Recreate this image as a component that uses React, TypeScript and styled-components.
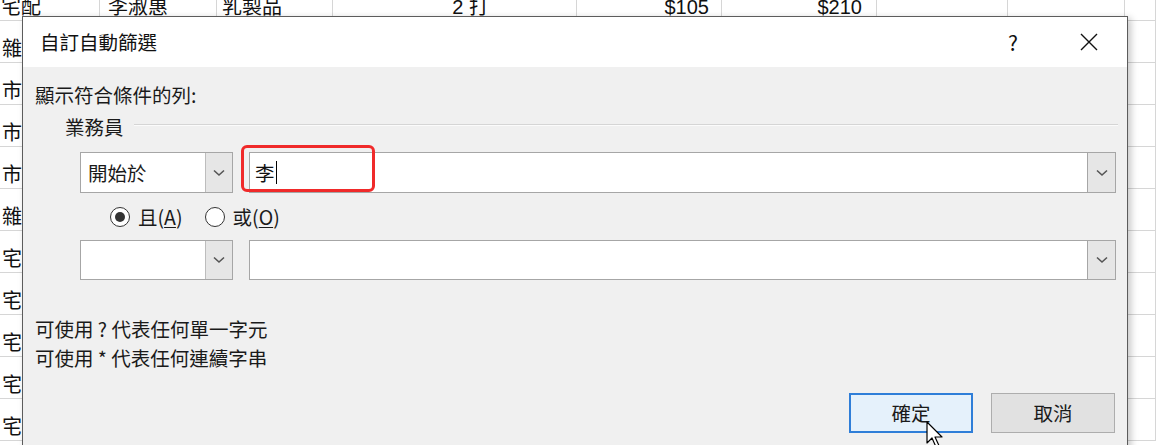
import React from 'react';
import styled, { createGlobalStyle } from 'styled-components';

const GlobalStyle = createGlobalStyle`
  html, body { margin: 0; padding: 0; background: #fff; }
  body { font-family: "Noto Sans CJK TC", "Noto Sans", sans-serif; }
  * { box-sizing: border-box; }
`;

const Screen = styled.div`
  position: relative;
  width: 1156px;
  height: 445px;
  overflow: hidden;
  background: #fff;
`;

const Sheet = styled.div`
  display: flex;
  flex-direction: column;
  margin-top: -21px;
`;

const SheetRow = styled.div`
  display: grid;
  grid-template-columns: 100px 117px 116px 244px 145px 155px 131px 117px 1fr;
  height: 42px;
`;

const Cell = styled.div<{ $right?: boolean; $pr?: number; $pl?: number }>`
  border-right: 1px solid #d6d6d6;
  border-bottom: 1px solid #d6d6d6;
  display: flex;
  align-items: flex-end;
  justify-content: ${p => (p.$right ? 'flex-end' : 'flex-start')};
  padding: 0 ${p => p.$pr ?? 4}px 1px ${p => p.$pl ?? 5}px;
  font-family: "Liberation Sans", "Noto Sans CJK TC", sans-serif;
  font-size: 20px;
  line-height: 24px;
  color: #111;
  white-space: nowrap;
  overflow: hidden;
`;

const Dialog = styled.div`
  position: absolute;
  left: 22px;
  top: 16px;
  width: 1106px;
  height: 460px;
  border: 1px solid #5c5c5c;
  background: #f0f0f0;
  box-shadow: 3px 2px 7px rgba(0, 0, 0, 0.22);
  display: flex;
  flex-direction: column;
  font-family: "Noto Sans CJK TC", "Noto Sans", sans-serif;
  font-size: 19.5px;
  color: #1a1a1a;
`;

const TitleBar = styled.div`
  height: 50px;
  background: #fff;
  display: flex;
  align-items: center;
  padding-left: 17px;
`;

const TitleText = styled.div`
  flex: 1;
  line-height: 24px;
  color: #111;
`;

const TitleButton = styled.div`
  width: 76px;
  height: 50px;
  display: flex;
  align-items: center;
  justify-content: center;
  font-size: 21px;
  color: #111;
`;

const Body = styled.div`
  display: flex;
  flex-direction: column;
  padding: 17px 11px 0 12px;
`;

const Label = styled.div`
  line-height: 22px;
`;

const GroupHeader = styled.div`
  display: flex;
  align-items: center;
  gap: 10px;
  margin: 10px -2px 0 30px;
  line-height: 22px;
`;

const GroupLine = styled.div`
  flex: 1;
  height: 2px;
  margin-top: -4px;
  border-top: 1px solid #d5d5d5;
  border-bottom: 1px solid #fbfbfb;
`;

const CondRow = styled.div<{ $mt: number }>`
  display: flex;
  gap: 16px;
  height: ${p => (p.$mt === 14 ? 41 : 40)}px;
  margin: ${p => p.$mt}px 0 0 45px;
`;

const Combo = styled.div`
  width: 153px;
  height: 100%;
  display: flex;
  border: 1px solid #a6a6a6;
  background: #fff;
`;

const ComboText = styled.div`
  flex: 1;
  display: flex;
  align-items: center;
  padding-left: 7px;
  line-height: 24px;
`;

const DropButton = styled.div`
  width: 27px;
  height: 100%;
  display: flex;
  align-items: center;
  justify-content: center;
  background: #e6e6e6;
  border-left: 1px solid #bdbdbd;
`;

const InputBox = styled.div`
  flex: 1;
  height: 100%;
  display: flex;
  border: 1px solid #a6a6a6;
  background: #fff;
`;

const InputText = styled.div`
  flex: 1;
  display: flex;
  align-items: center;
  padding-left: 5px;
  line-height: 24px;
  color: #111;
`;

const Caret = styled.span`
  width: 0;
  height: 23px;
  border-left: 1.5px solid #000;
  margin-left: 1px;
`;

const InputDrop = styled(DropButton)`
  width: 28px;
  border-left: 1px solid #a6a6a6;
`;

const RadioRow = styled.div`
  display: flex;
  align-items: center;
  gap: 22px;
  margin: 13px 0 0 75px;
  height: 22px;
`;

const RadioItem = styled.label`
  display: flex;
  align-items: center;
  gap: 8px;
  line-height: 22px;
`;

const RadioCircle = styled.span<{ $checked?: boolean }>`
  width: 20px;
  height: 20px;
  border-radius: 50%;
  border: 1.6px solid #333;
  background: #fff;
  display: flex;
  align-items: center;
  justify-content: center;
  &::after {
    content: '';
    width: 10px;
    height: 10px;
    border-radius: 50%;
    background: #333;
    display: ${p => (p.$checked ? 'block' : 'none')};
  }
`;

const Accel = styled.span`
  text-decoration: underline;
  text-underline-offset: 2px;
`;

const HelpBlock = styled.div`
  display: flex;
  flex-direction: column;
  margin-top: 34px;
  line-height: 29px;
`;

const ButtonRow = styled.div`
  display: flex;
  justify-content: flex-end;
  gap: 18px;
  margin: 21px 1px 0 0;
`;

const DlgButton = styled.div<{ $primary?: boolean }>`
  width: 124px;
  height: 40px;
  display: flex;
  align-items: center;
  justify-content: center;
  border: ${p => (p.$primary ? '2px solid #2f7ed8' : '1px solid #adadad')};
  background: ${p => (p.$primary ? '#e5f1fb' : '#e1e1e1')};
  color: #1a1a1a;
  line-height: 24px;
`;

const Highlight = styled.div`
  position: absolute;
  left: 241px;
  top: 145px;
  width: 134px;
  height: 47px;
  border: 3px solid #f02a2a;
  border-radius: 6px;
  pointer-events: none;
`;

const Pointer = styled.svg`
  position: absolute;
  left: 926px;
  top: 421px;
`;

const Chevron = () => (
  <svg width="12" height="8" viewBox="0 0 12 8">
    <path d="M1 1.5 L6 6 L11 1.5" fill="none" stroke="#555" strokeWidth="1.6" />
  </svg>
);

const rows: string[] = ['雜誌', '市場', '市場', '市場', '雜誌', '宅配', '宅配', '宅配', '宅配', '宅配'];

export default function App() {
  return (
    <>
      <GlobalStyle />
      <Screen>
        <Sheet>
          <SheetRow>
            <Cell $pl={1}>宅配</Cell>
            <Cell $pl={8}>李淑惠</Cell>
            <Cell>乳製品</Cell>
            <Cell $right $pr={87}>2 打</Cell>
            <Cell $right $pr={12}>$105</Cell>
            <Cell $right $pr={14}>$210</Cell>
            <Cell />
            <Cell />
            <Cell />
          </SheetRow>
          {rows.map((r, i) => (
            <SheetRow key={i}>
              <Cell $pl={2}>{r}</Cell>
              <Cell />
              <Cell />
              <Cell />
              <Cell />
              <Cell />
              <Cell />
              <Cell />
              <Cell />
            </SheetRow>
          ))}
        </Sheet>

        <Dialog>
          <TitleBar>
            <TitleText>自訂自動篩選</TitleText>
            <TitleButton>?</TitleButton>
            <TitleButton>
              <svg width="18" height="18" viewBox="0 0 18 18">
                <path d="M1 1 L17 17 M17 1 L1 17" stroke="#111" strokeWidth="1.4" />
              </svg>
            </TitleButton>
          </TitleBar>
          <Body>
            <Label>顯示符合條件的列:</Label>
            <GroupHeader>
              <span>業務員</span>
              <GroupLine />
            </GroupHeader>
            <CondRow $mt={14}>
              <Combo>
                <ComboText>開始於</ComboText>
                <DropButton><Chevron /></DropButton>
              </Combo>
              <InputBox>
                <InputText>李<Caret /></InputText>
                <InputDrop><Chevron /></InputDrop>
              </InputBox>
            </CondRow>
            <RadioRow>
              <RadioItem>
                <RadioCircle $checked />
                <span>且(<Accel>A</Accel>)</span>
              </RadioItem>
              <RadioItem>
                <RadioCircle />
                <span>或(<Accel>O</Accel>)</span>
              </RadioItem>
            </RadioRow>
            <CondRow $mt={12}>
              <Combo>
                <ComboText />
                <DropButton><Chevron /></DropButton>
              </Combo>
              <InputBox>
                <InputText />
                <InputDrop><Chevron /></InputDrop>
              </InputBox>
            </CondRow>
            <HelpBlock>
              <span>可使用 ? 代表任何單一字元</span>
              <span>可使用 * 代表任何連續字串</span>
            </HelpBlock>
            <ButtonRow>
              <DlgButton $primary>確定</DlgButton>
              <DlgButton>取消</DlgButton>
            </ButtonRow>
          </Body>
        </Dialog>

        <Highlight />
        <Pointer width="24" height="30" viewBox="0 0 24 30">
          <path d="M1 1 L1 22 L6 17 L10 26 L13 24.6 L9 16 L16 16 Z" fill="#fff" stroke="#000" strokeWidth="1.2" strokeLinejoin="round" />
        </Pointer>
      </Screen>
    </>
  );
}
